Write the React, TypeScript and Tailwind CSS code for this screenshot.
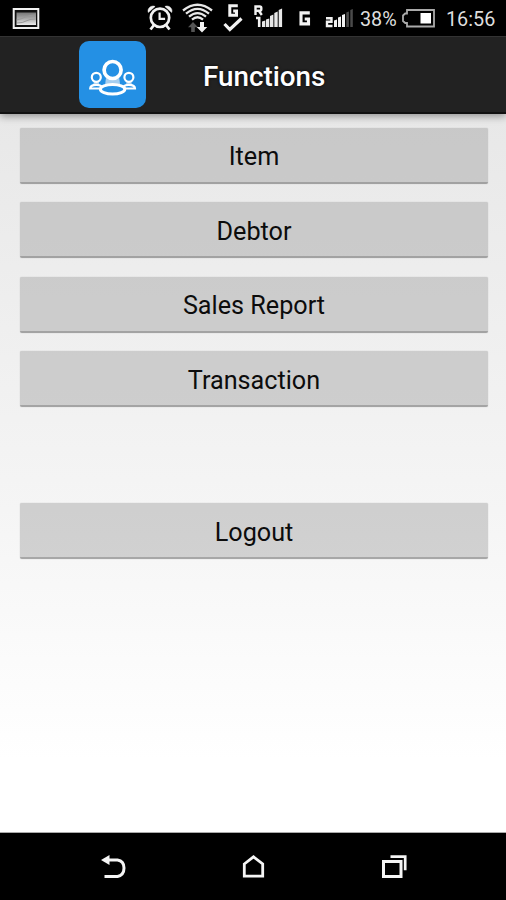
import React from "react";

function PictureIcon() {
  return (
    <svg className="ml-3 h-9 w-7 shrink-0" viewBox="12 0 28 36">
      <defs>
        <linearGradient id="photo" x1="0" y1="0" x2="0" y2="1">
          <stop offset="0" stopColor="#777" />
          <stop offset="0.5" stopColor="#aaa" />
          <stop offset="1" stopColor="#eee" />
        </linearGradient>
      </defs>
      <rect x="13.700" y="9" width="24.600" height="19" fill="#111" stroke="#f2f2f2" strokeWidth="2" />
      <rect x="16.500" y="12.500" width="19.500" height="12.500" fill="url(#photo)" />
      <path d="M16.500 20q5-1 9-3t10-2M17 23q6 0 9-2t10-2" fill="none" stroke="#999" strokeWidth="1" />
    </svg>
  );
}

function AlarmIcon() {
  return (
    <svg className="ml-[106px] h-9 w-7 shrink-0" viewBox="146 0 28 36" fill="none" stroke="#f2f2f2">
      <circle cx="160" cy="17.800" r="9.200" strokeWidth="2.700" />
      <path d="M159.600 12.500v6.300h5.500" strokeWidth="2.200" />
      <path d="M154 25l-3.500 4.500M166 25l3.500 4.500" strokeWidth="2.800" />
      <path d="M148.300 12.500c-1.500-4 3-7.800 6.800-6zM171.700 12.500c1.500-4-3-7.800-6.800-6z" fill="#f2f2f2" strokeWidth="0.500" />
    </svg>
  );
}

function WifiIcon() {
  return (
    <svg className="ml-2 h-9 w-8 shrink-0" viewBox="182 0 32 36" fill="none" stroke="#e8e8e8" strokeWidth="2.300">
      <path d="M183 10.500Q197.500-1 212 10.500" />
      <path d="M186 13.700Q197.500 4 209 13.700" />
      <path d="M189 16.700Q197.500 9.500 206 16.700" />
      <path d="M192 19.700Q197.500 14.800 203 19.700" />
      <path d="M191.200 32h3.600v-4.800h3.200l-5-5.200-5 5.200h3.200z" fill="#555" stroke="none" />
      <path d="M200 22h4v5h3.300l-5.300 5.600-5.300-5.600h3.300z" fill="#f5f5f5" stroke="none" />
    </svg>
  );
}

function DataCheckIcon() {
  return (
    <svg className="ml-2 h-9 w-[22px] shrink-0" viewBox="222 0 22 36" fill="none" stroke="#f2f2f2">
      <path d="M237.800 5.800h-8v9.400h6.700v-4.200h-3.300" strokeWidth="3" />
      <path d="M224.500 24l5.300 5.500 11.700-11" strokeWidth="3.200" />
    </svg>
  );
}

function RoamingSignalIcon() {
  return (
    <svg className="ml-2.5 h-9 w-[30px] shrink-0" viewBox="254 0 30 36" fill="#e8e8e8">
      <path d="M255.500 15V6.500h4.200q1.600 0 1.600 1.500v1.300q0 1.500-1.600 1.500h-4M259 11l2.800 4" fill="none" stroke="#f2f2f2" strokeWidth="2.400" />
      <path d="M256 18h3.200v9" fill="none" stroke="#f2f2f2" strokeWidth="2.600" />
      <path d="M262 21.500l3.300-1V27H262zM266 19.500l3.300-1V27H266zM270 16l3.400-1.500V27H270zM274.300 13l3.400-1.500V27h-3.400zM278.700 10l3.400-1.500V27h-3.400z" />
    </svg>
  );
}

function NetworkIcon() {
  return (
    <svg className="ml-3.5 h-9 w-3.5 shrink-0" viewBox="298 0 14 36" fill="none">
      <path d="M309.800 12.900h-8.800v11h7.500v-4.900h-3.800" stroke="#f2f2f2" strokeWidth="3.100" />
    </svg>
  );
}

function SecondSignalIcon() {
  return (
    <svg className="ml-3 h-9 w-[30px] shrink-0" viewBox="324 0 30 36">
      <path d="M326 18.200h5.500v3.500h-4.500V26h5.500" fill="none" stroke="#f2f2f2" strokeWidth="2.400" />
      <path d="M334 20.500l3-1V27h-3zM338 17.500l3-1V27h-3zM342 15l3-1V27h-3z" fill="#f2f2f2" />
      <path d="M346.300 12.500l2.600-1V27h-2.600zM350.300 10l2.500-1V27h-2.500z" fill="#4a4a4a" />
    </svg>
  );
}

function BatteryIcon() {
  return (
    <svg className="h-9 w-9 shrink-0" viewBox="401 0 36 36">
      <path d="M407 10h27v16.500h-27v-3.500h-1.800l-2.200-2v-5.500l2.200-2h1.800z" fill="none" stroke="#aaa" strokeWidth="1.800" />
      <rect x="420.500" y="13" width="10.500" height="10.500" fill="#fff" />
    </svg>
  );
}

function PeopleLogo() {
  return (
    <svg className="ml-[79px] h-[67px] w-[67px] shrink-0 rounded-[10px] bg-[#2490e4]" viewBox="79 41 67 67" fill="none" stroke="#fff">
      <g strokeWidth="2.200">
        <path d="M94 81h4.500l1 5h-6.500zM131.200 81h-4.500l-1 5h6.500z" fill="#a6ceef" stroke="none" />
        <circle cx="96.300" cy="77.300" r="4.500" fill="#2490e4" />
        <circle cx="128.900" cy="77.300" r="4.500" fill="#2490e4" />
        <path d="M101 88.500H90.200c0-2.600 2.600-3.700 6.100-3.700 2.500 0 4 .4 5.200 1.600M124.200 88.500H135c0-2.600-2.600-3.700-6.100-3.700-2.500 0-4 .4-5.200 1.600" />
      </g>
      <path d="M106 78l-1 7h15.200l-1-7z" fill="#a6ceef" stroke="none" />
      <circle cx="112.600" cy="70" r="8.500" fill="#2490e4" strokeWidth="3.700" />
      <ellipse cx="112.600" cy="89.200" rx="12.200" ry="4.800" fill="#2490e4" strokeWidth="3" />
    </svg>
  );
}

function BackIcon() {
  return (
    <svg className="ml-[100px] h-8 w-7 shrink-0" viewBox="100 851 28 32" fill="none">
      <path d="M107 860h10.500q6.500 1 6.500 8t-6.500 8.500h-13" stroke="#f5f5f5" strokeWidth="3" />
      <path d="M101 860l8.500-5v10z" fill="#f5f5f5" />
    </svg>
  );
}

function HomeIcon() {
  return (
    <svg className="ml-28 h-8 w-7 shrink-0" viewBox="240 851 28 32" fill="none">
      <path d="M244.300 864l9.200-7.200 9.200 7.200v12.200h-18.400z" stroke="#f5f5f5" strokeWidth="2.800" />
    </svg>
  );
}

function RecentsIcon() {
  return (
    <svg className="ml-28 h-8 w-7 shrink-0" viewBox="380 851 28 32" fill="none" stroke="#f5f5f5">
      <rect x="383.500" y="861.500" width="17.500" height="15" strokeWidth="3" />
      <path d="M390.500 856.700h14.700v13.500" strokeWidth="2.700" />
    </svg>
  );
}

function MenuButton({ label }: { label: string }) {
  return (
    <button className="flex h-14 w-full shrink-0 items-center justify-center rounded-[2px] border-b-2 border-black/20 bg-[rgba(162,162,162,0.45)] pt-[5px] text-[25.200px] leading-none text-[#0c0c0c] shadow-[0_0_1px_#aaa]">
      {label}
    </button>
  );
}

export default function App() {
  return (
    <div className="flex h-[900px] w-[506px] flex-col overflow-hidden bg-black font-['Roboto',sans-serif]">
      <div className="flex h-9 shrink-0 items-center bg-black text-[#dedede]">
        <PictureIcon />
        <AlarmIcon />
        <WifiIcon />
        <DataCheckIcon />
        <RoamingSignalIcon />
        <NetworkIcon />
        <SecondSignalIcon />
        <span className="ml-1.5 w-[41px] shrink-0 whitespace-nowrap pt-[3px] text-[19.800px] leading-none">38%</span>
        <BatteryIcon />
        <span className="ml-[9px] whitespace-nowrap pt-[3px] text-[19.800px] leading-none">16:56</span>
      </div>

      <header className="z-10 flex h-[78px] shrink-0 items-center border-b-2 border-[#111] border-t border-t-[#333] bg-[#222] shadow-[0_2px_8px_rgba(0,0,0,0.4)]">
        <PeopleLogo />
        <h1 className="ml-[57px] pt-1 text-[27.800px] font-medium leading-none text-white [text-shadow:0_0_3px_#000]">Functions</h1>
      </header>

      <main className="flex h-[719px] shrink-0 flex-col border-b border-[#aaa] bg-linear-to-b from-[#e8e8e8] via-[#f5f5f5] via-55% to-white to-90% pt-[13.500px] pr-[18px] pl-5">
        <nav className="flex flex-col gap-[18.500px]">
          <MenuButton label="Item" />
          <MenuButton label="Debtor" />
          <MenuButton label="Sales Report" />
          <MenuButton label="Transaction" />
        </nav>
        <div className="mt-24">
          <MenuButton label="Logout" />
        </div>
      </main>

      <footer className="flex h-[67px] shrink-0 items-center bg-black">
        <BackIcon />
        <HomeIcon />
        <RecentsIcon />
      </footer>
    </div>
  );
}
